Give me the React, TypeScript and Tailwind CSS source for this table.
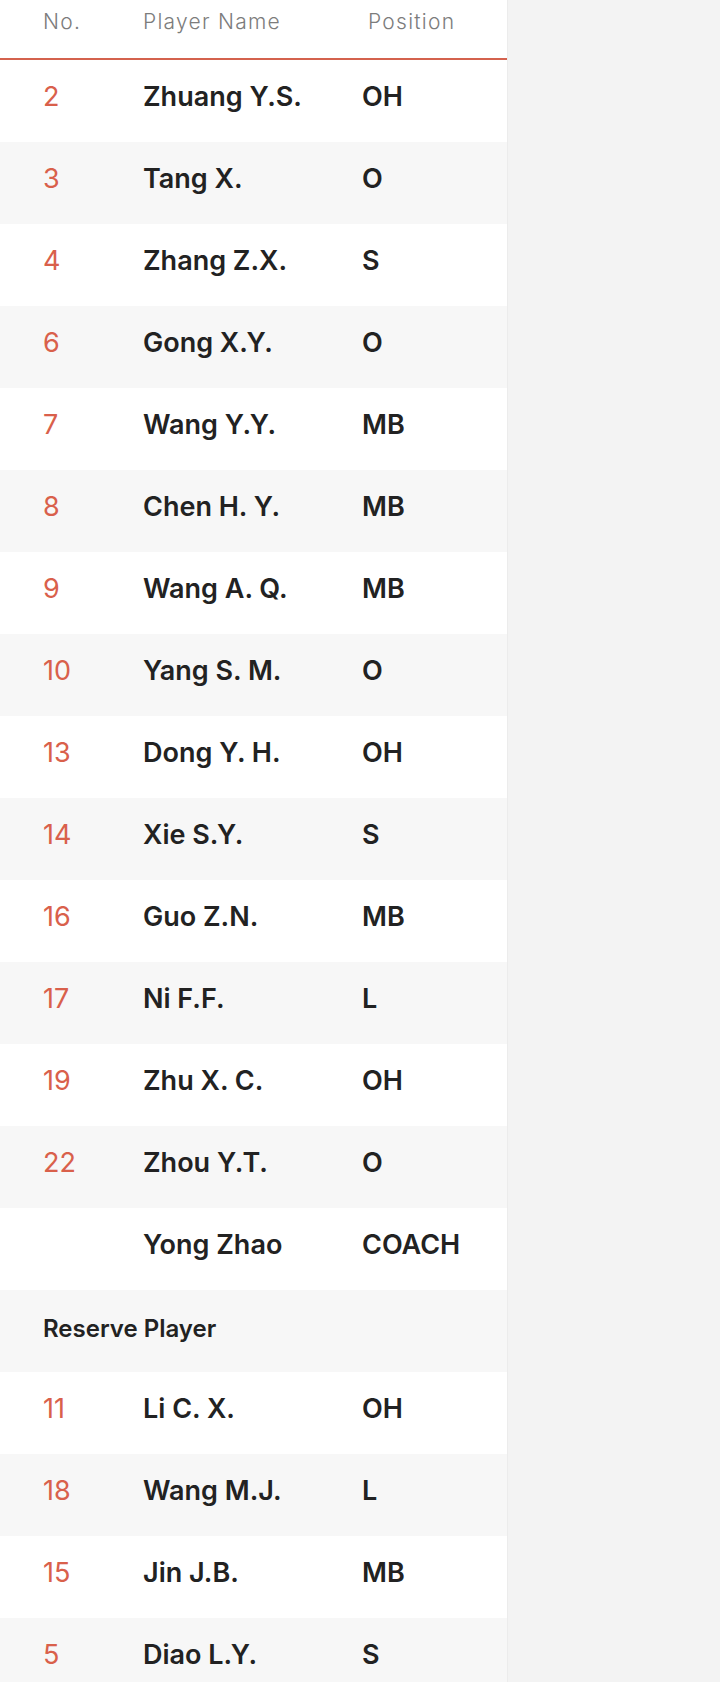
const players: [string, string, string][] = [
  ["2", "Zhuang Y.S.", "OH"],
  ["3", "Tang X.", "O"],
  ["4", "Zhang Z.X.", "S"],
  ["6", "Gong X.Y.", "O"],
  ["7", "Wang Y.Y.", "MB"],
  ["8", "Chen H. Y.", "MB"],
  ["9", "Wang A. Q.", "MB"],
  ["10", "Yang S. M.", "O"],
  ["13", "Dong Y. H.", "OH"],
  ["14", "Xie S.Y.", "S"],
  ["16", "Guo Z.N.", "MB"],
  ["17", "Ni F.F.", "L"],
  ["19", "Zhu X. C.", "OH"],
  ["22", "Zhou Y.T.", "O"],
  ["", "Yong Zhao", "COACH"],
];

const reserves: [string, string, string][] = [
  ["11", "Li C. X.", "OH"],
  ["18", "Wang M.J.", "L"],
  ["15", "Jin J.B.", "MB"],
  ["5", "Diao L.Y.", "S"],
];

function Row({ no, name, pos, shaded }: { no: string; name: string; pos: string; shaded: boolean }) {
  return (
    <div className={`flex h-[82px] shrink-0 items-center pb-[7px] ${shaded ? "bg-[#f7f7f7]" : "bg-white"}`}>
      <div className="w-[143px] pl-[43px] text-[27px] font-normal text-[#d9604b]">{no}</div>
      <div className="w-[219px] text-[27px] font-semibold text-[#222222]">{name}</div>
      <div className="text-[27px] font-semibold text-[#222222]">{pos}</div>
    </div>
  );
}

export default function App() {
  return (
    <div className="flex h-[1682px] overflow-hidden bg-[#f3f3f3] font-['Inter',sans-serif]">
      <div className="flex w-[507px] shrink-0 flex-col bg-white">
        {/* Header */}
        <div className="flex h-[58px] shrink-0 items-start pt-[6px] text-[21px] font-light tracking-[0.06em] text-[#7c7c7c]">
          <div className="w-[143px] pl-[43px]">No.</div>
          <div className="w-[219px]">Player Name</div>
          <div className="pl-[6px]">Position</div>
        </div>
        <div className="h-[2px] shrink-0 bg-[#d4624e]" />

        {players.map((p, i) => (
          <Row key={p[1]} no={p[0]} name={p[1]} pos={p[2]} shaded={i % 2 === 1} />
        ))}

        <div className="flex h-[82px] shrink-0 items-center bg-[#f7f7f7] pb-[4px] pl-[43px] text-[24px] font-semibold text-[#222222]">
          Reserve Player
        </div>

        {reserves.map((p, i) => (
          <Row key={p[1]} no={p[0]} name={p[1]} pos={p[2]} shaded={i % 2 === 1} />
        ))}
      </div>
      <div className="flex-1 border-l border-[#ececec]" />
    </div>
  );
}
